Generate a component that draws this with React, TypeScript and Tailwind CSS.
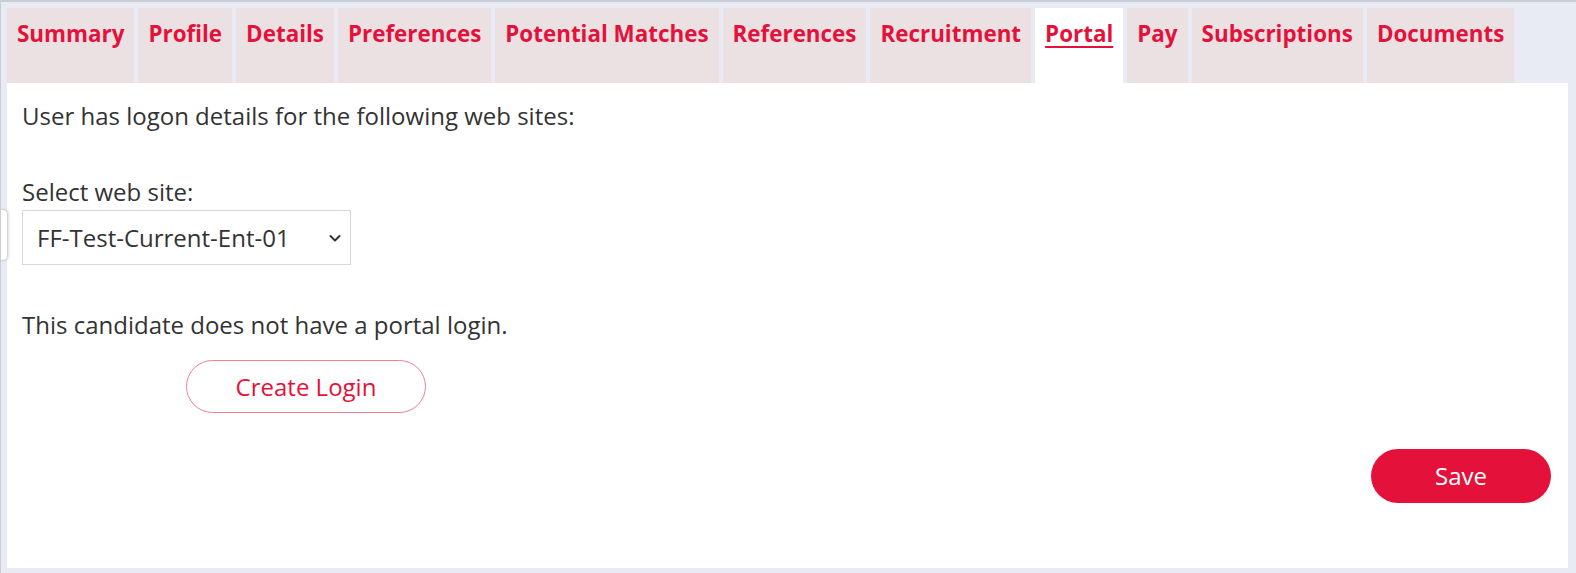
import React from "react";

const tabs = [
  "Summary",
  "Profile",
  "Details",
  "Preferences",
  "Potential Matches",
  "References",
  "Recruitment",
  "Portal",
  "Pay",
  "Subscriptions",
  "Documents",
];

export default function App() {
  return (
    <div
      className="relative w-[1576px] h-[573px] bg-[#e8ebf3] border-t-2 border-l border-[#c9cdd6] overflow-hidden"
      style={{ fontFamily: '"Open Sans", "Noto Sans", sans-serif' }}
    >
      <div className="flex gap-[4px] pl-[6px] pt-[6px] h-[81px]">
        {tabs.map((t) =>
          t === "Portal" ? (
            <div
              key={t}
              className="bg-white px-[10px] pt-[9px] text-[22.4px] font-bold text-[#e4123a] underline underline-offset-[4px] decoration-2 leading-[34px]"
            >
              {t}
            </div>
          ) : (
            <div
              key={t}
              className="bg-[#ebe1e3] px-[10px] pt-[9px] text-[22.4px] font-bold text-[#e4123a] leading-[34px]"
            >
              {t}
            </div>
          )
        )}
      </div>
      <div className="ml-[6px] w-[1561px] h-[485px] bg-white pl-[15px] pr-[17px] pt-[18px] text-[24px] text-[#333333]">
        <p className="leading-[30px]">User has logon details for the following web sites:</p>
        <p className="mt-[46px] leading-[30px]">Select web site:</p>
        <div className="mt-[3px] w-[329px] h-[55px] border border-[#d4d7e2] flex items-center justify-between pl-[14px] pr-[7px]">
          <span className="leading-[30px]">FF-Test-Current-Ent-01</span>
          <svg width="16" height="16" viewBox="0 0 16 16" fill="none">
            <path d="M3.5 6 L8 10.5 L12.5 6" stroke="#333" strokeWidth="2" strokeLinecap="round" strokeLinejoin="round" />
          </svg>
        </div>
        <p className="mt-[45px] leading-[30px]">This candidate does not have a portal login.</p>
        <div className="mt-[20px] pl-[164px]">
          <button className="w-[240px] h-[53px] rounded-full border border-[#f27f92] text-[#e4123a] text-[24px] bg-white">
            Create Login
          </button>
        </div>
        <div className="mt-[36px] flex justify-end">
          <button className="w-[180px] h-[54px] rounded-full bg-[#e4123a] text-white text-[24px]">
            Save
          </button>
        </div>
      </div>
      <div className="absolute left-[-4px] top-[208px] w-[10px] h-[50px] bg-white rounded-r-[4px] shadow-[1px_0_3px_rgba(0,0,0,0.25)]" />
    </div>
  );
}
